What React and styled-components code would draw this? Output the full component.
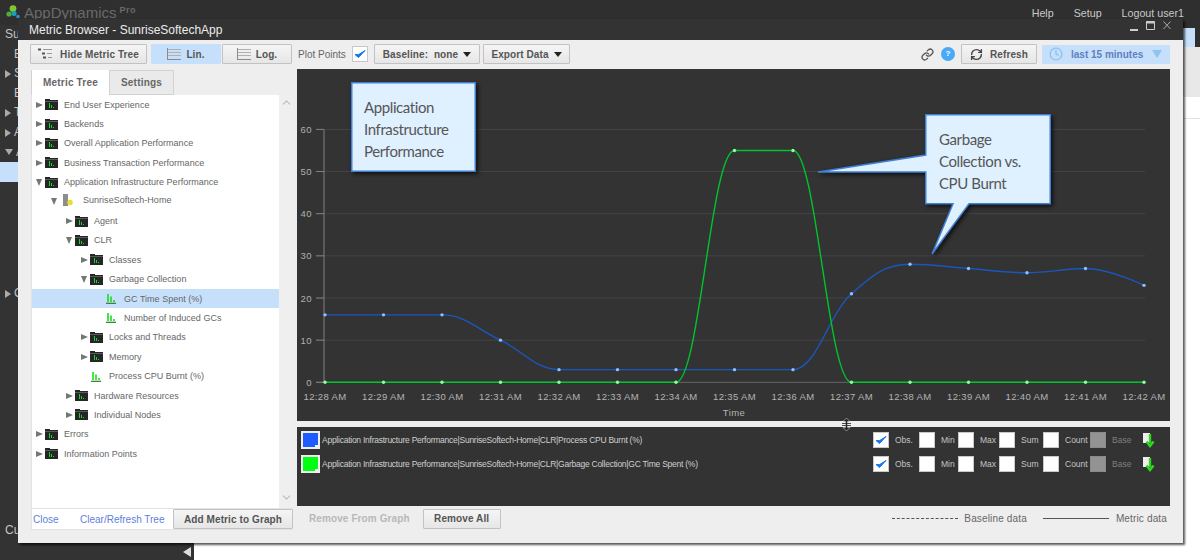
import React from 'react';
import styled, { createGlobalStyle } from 'styled-components';
import { ChevronUp, ChevronDown, Clock, Link as LinkIcon, RefreshCw } from 'lucide-react';

const GlobalStyle = createGlobalStyle`
  html, body {
    margin: 0;
    padding: 0;
    background: #fff;
    font-family: "Liberation Sans", Arial, sans-serif;
  }
`;

const Page = styled.div`
  position: relative;
  width: 1200px;
  height: 560px;
  overflow: hidden;
  display: flex;
  flex-direction: column;
`;

const TopBar = styled.header`
  height: 25px;
  background: #2f2f2f;
  display: flex;
  align-items: flex-start;
  padding: 5px 16px 0 6px;
  box-sizing: border-box;
`;

const BrandName = styled.span`
  margin-left: 4px;
  font-size: 15px;
  line-height: 16px;
  color: #6a6a6a;
`;

const BrandTag = styled.span`
  margin: 1px 0 0 3px;
  font-size: 9px;
  line-height: 9px;
  font-weight: bold;
  letter-spacing: 0.5px;
  color: #6a6a6a;
`;

const TopNav = styled.nav`
  margin-left: auto;
  display: flex;
  gap: 20px;
  font-size: 10.7px;
  line-height: 16px;
  color: #c8c8c8;
`;

const Shell = styled.div`
  flex: 1;
  display: flex;
`;

const Sidebar = styled.aside`
  width: 194px;
  background: #333;
  display: flex;
  flex-direction: column;
  color: #c4c4c4;
  font-size: 12px;
`;

const SideItem = styled.div`
  height: 19.6px;
  line-height: 19.6px;
  display: flex;
  align-items: center;
  gap: 3px;
  padding-left: ${(p) => p.$indent || 5}px;
  margin-top: ${(p) => p.$gap || 0}px;
  background: ${(p) => (p.$active ? '#c6e0fb' : 'transparent')};
`;

const SideCollapse = styled.div`
  margin: auto 3px 3px auto;
  width: 0;
  height: 0;
  border-top: 5px solid transparent;
  border-bottom: 5px solid transparent;
  border-right: 8px solid #ddd;
`;

const Content = styled.main`
  flex: 1;
  display: flex;
  flex-direction: column;
`;

const SubBar = styled.div`
  height: 22px;
  background: #2f2f2f;
  display: flex;
  justify-content: flex-end;
  padding-right: 5px;
`;

const SubBarButton = styled.div`
  width: 60px;
  height: 19px;
  margin-top: 3px;
  background: #c6e0fb;
`;

const GreyBand = styled.div`
  height: 50px;
  background: #e8e8e8;
`;

const WhiteArea = styled.div`
  flex: 1;
  background: #fff;
`;

const WhiteRule = styled.div`
  margin-top: 21px;
  border-top: 1px solid #e2e2e2;
`;

const Modal = styled.section`
  position: absolute;
  left: 18px;
  top: 19px;
  width: 1165px;
  height: 524px;
  display: flex;
  flex-direction: column;
  box-shadow: 2px 2px 2px rgba(0, 0, 0, 0.65);
`;

const TitleBar = styled.div`
  height: 21px;
  background: #333;
  display: flex;
  align-items: center;
  padding: 0 12px 0 11px;
  color: #ededed;
  font-size: 12px;
`;

const WindowControls = styled.div`
  margin-left: auto;
  display: flex;
  align-items: flex-start;
  gap: 8px;
  margin-top: -7px;
`;

const ModalBody = styled.div`
  flex: 1;
  background: #eee;
  padding: 4px 13px 0 12px;
  display: flex;
  flex-direction: column;
  gap: 5px;
`;

const Toolbar = styled.div`
  height: 20px;
  display: flex;
  align-items: center;
`;

const Button = styled.button`
  height: 20px;
  width: ${(p) => p.$w}px;
  flex: none;
  margin-left: ${(p) => p.$ml || 0}px;
  box-sizing: border-box;
  padding: 0;
  display: flex;
  align-items: center;
  justify-content: center;
  gap: ${(p) => p.$iconGap || 5}px;
  background: ${(p) => (p.$active ? '#c6e0fb' : 'linear-gradient(#f5f5f5, #e6e6e6)')};
  border: 1px solid ${(p) => (p.$active ? '#c6e0fb' : '#c2c2c2')};
  border-radius: 1px;
  font-family: inherit;
  font-size: 10px;
  font-weight: bold;
  letter-spacing: 0.1px;
  white-space: nowrap;
  color: #555;
`;

const ToolLabel = styled.span`
  margin-left: 6px;
  width: 46px;
  font-size: 10px;
  white-space: nowrap;
  color: #666;
`;

const Check = styled.span`
  width: 16px;
  height: 16px;
  margin-left: ${(p) => p.$ml || 0}px;
  box-sizing: border-box;
  flex: none;
  display: inline-flex;
  align-items: center;
  justify-content: center;
  background: ${(p) => (p.$disabled ? '#939393' : '#fff')};
  border: 1px solid ${(p) => (p.$disabled ? '#8a8a8a' : '#c8c8c8')};
`;

const Caret = styled.i`
  width: 0;
  height: 0;
  border-left: 4px solid transparent;
  border-right: 4px solid transparent;
  border-top: 5px solid #222;
`;

const ToolRight = styled.div`
  margin-left: auto;
  display: flex;
  align-items: center;
`;

const Help = styled.span`
  width: 14px;
  height: 14px;
  margin: 0 6px 0 7px;
  border-radius: 50%;
  background: #4aa9f6;
  color: #fff;
  font-size: 8px;
  font-weight: bold;
  line-height: 14px;
  text-align: center;
`;

const TimeRange = styled.div`
  width: 128px;
  height: 19px;
  margin-left: 5px;
  padding: 0 8px 0 7px;
  box-sizing: border-box;
  display: flex;
  align-items: center;
  background: #c6e0fb;
  font-size: 10px;
  font-weight: bold;
  white-space: nowrap;
  color: #5f80bd;
`;

const TimeText = styled.span`
  margin-left: 8px;
`;

const TimeCaret = styled.i`
  margin-left: auto;
  width: 0;
  height: 0;
  border-left: 5px solid transparent;
  border-right: 5px solid transparent;
  border-top: 8px solid #8fc3ef;
`;

const MainGrid = styled.div`
  display: grid;
  grid-template-columns: 262px 873px;
  gap: 4px;
  margin-left: 1px;
`;

const LeftColumn = styled.div`
  padding-top: 1px;
  display: flex;
  flex-direction: column;
`;

const Tabs = styled.div`
  height: 25px;
  display: flex;
`;

const Tab = styled.div`
  width: ${(p) => p.$w}px;
  box-sizing: border-box;
  display: flex;
  align-items: center;
  justify-content: center;
  background: ${(p) => (p.$active ? '#fff' : '#eaeaea')};
  border: 1px solid #d2d2d2;
  border-bottom: ${(p) => (p.$active ? 'none' : '1px solid #d2d2d2')};
  border-left-width: ${(p) => (p.$active ? 1 : 0)}px;
  border-top-width: ${(p) => (p.$active ? 0 : 1)}px;
  font-size: 10px;
  font-weight: bold;
  letter-spacing: 0.2px;
  color: #666;
`;

const TreeBox = styled.div`
  height: 413px;
  display: flex;
`;

const TreeList = styled.div`
  flex: 1;
  background: #fff;
  border-left: 1px solid #e3e3e3;
`;

const ScrollRail = styled.div`
  width: 14px;
  display: flex;
  flex-direction: column;
  justify-content: space-between;
  align-items: center;
  padding: 1px 0 4px;
  color: #bbb;
  background: #efefef;
`;

const TreeRow = styled.div`
  height: 19.4px;
  display: flex;
  align-items: center;
  padding-left: ${(p) => 4 + p.$level * 15}px;
  background: ${(p) => (p.$selected ? '#c6e0fb' : 'transparent')};
  font-size: 9px;
  letter-spacing: 0.02px;
  color: #666;
`;

const Twisty = styled.span`
  width: 9px;
  flex: none;
  display: inline-flex;
`;

const TwistyShape = styled.i`
  width: 0;
  height: 0;
  ${(p) => (p.$open
    ? `border-left: 3.5px solid transparent;
       border-right: 3.5px solid transparent;
       border-top: 7px solid #6f7a70;`
    : `border-top: 3.5px solid transparent;
       border-bottom: 3.5px solid transparent;
       border-left: 7px solid #6f7a70;`)}
`;

const FolderSvg = styled.svg`
  flex: none;
  margin-right: 6px;
`;

const MetricSvg = styled.svg`
  flex: none;
  margin: 0 8px 0 1px;
`;

const ServerSvg = styled.svg`
  flex: none;
  margin: -3px 10px 0 3px;
`;

const NodeLabel = styled.span`
  position: relative;
  top: ${(p) => (p.$raised ? -2 : 0)}px;
`;

const TreeFooter = styled.div`
  height: 22px;
  display: flex;
  align-items: center;
  background: #fff;
  border: 1px solid #e3e3e3;
  border-right: none;
  box-sizing: border-box;
  padding-left: 1px;
  font-size: 10px;
  color: #5f80dc;
`;

const FooterLink = styled.span`
  width: ${(p) => p.$w}px;
  flex: none;
  white-space: nowrap;
`;

const RightColumn = styled.div`
  display: flex;
  flex-direction: column;
`;

const ChartPanel = styled.div`
  position: relative;
  height: 352px;
  background: #333;
`;

const ChartSvg = styled.svg`
  display: block;
  font-family: "Liberation Sans", Arial, sans-serif;
`;

const ResizeCursor = styled.svg`
  position: absolute;
  left: 545px;
  bottom: -10px;
`;

const Balloon = styled.div`
  position: absolute;
  left: ${(p) => p.$left}px;
  top: ${(p) => p.$top}px;
`;

const BalloonShape = styled.svg`
  display: block;
  overflow: visible;
  filter: drop-shadow(2px 2px 2px rgba(0, 0, 0, 0.7));
`;

const BalloonText = styled.div`
  position: absolute;
  left: ${(p) => p.$x}px;
  top: 14px;
  font-family: Lato, "Open Sans", sans-serif;
  font-size: 15px;
  line-height: 22px;
  letter-spacing: -0.4px;
  color: #565656;
  white-space: nowrap;
`;

const LegendPanel = styled.div`
  height: 79px;
  margin-top: 6px;
  box-sizing: border-box;
  padding: 1px 15px 0 4px;
  background: #333;
`;

const LegendRow = styled.div`
  height: 24px;
  display: flex;
  align-items: center;
`;

const Swatch = styled.span`
  position: relative;
  width: 19px;
  height: 18px;
  box-sizing: border-box;
  flex: none;
  border: 2px solid #eee;
  background: ${(p) => p.$color};
  &::after {
    content: '';
    position: absolute;
    right: -1px;
    bottom: -1px;
    width: 4px;
    height: 3px;
    background: #eee;
  }
`;

const LegendName = styled.span`
  margin-left: 2px;
  font-size: 8.5px;
  letter-spacing: -0.25px;
  color: #cfcfcf;
  white-space: nowrap;
`;

const LegendControls = styled.div`
  margin-left: auto;
  display: flex;
  align-items: center;
`;

const StatLabel = styled.span`
  width: ${(p) => p.$w}px;
  margin-left: 6px;
  font-size: 8.5px;
  color: ${(p) => (p.$muted ? '#7e7e7e' : '#c4c4c4')};
`;

const BottomBar = styled.div`
  height: 25px;
  display: flex;
  align-items: center;
  font-size: 10px;
  color: #666;
`;

const DisabledAction = styled.span`
  margin-left: 12px;
  font-weight: bold;
  letter-spacing: 0.1px;
  white-space: nowrap;
  color: #b8b8b8;
`;

const KeyArea = styled.div`
  margin-left: auto;
  display: flex;
  align-items: center;
  padding-right: 3px;
  letter-spacing: 0.15px;
  white-space: nowrap;
`;

const KeyLine = styled.i`
  width: 66px;
  margin: ${(p) => (p.$dashed ? '0 6px 0 0' : '0 7px 0 16px')};
  border-top: 1px ${(p) => (p.$dashed ? 'dashed' : 'solid')} #555;
`;

const SideCaret = styled.i`
  width: 0;
  height: 0;
  ${(p) => (p.$open
    ? `border-left: 4px solid transparent;
       border-right: 4px solid transparent;
       border-top: 6px solid #aaa;`
    : `border-top: 4px solid transparent;
       border-bottom: 4px solid transparent;
       border-left: 6px solid #aaa;`)}
`;

// nodes of the metric tree, level is the indent
const treeNodes = [
  { label: 'End User Experience', level: 0, kind: 'folder' },
  { label: 'Backends', level: 0, kind: 'folder' },
  { label: 'Overall Application Performance', level: 0, kind: 'folder' },
  { label: 'Business Transaction Performance', level: 0, kind: 'folder' },
  { label: 'Application Infrastructure Performance', level: 0, kind: 'folder', open: true },
  { label: 'SunriseSoftech-Home', level: 1, kind: 'server', open: true },
  { label: 'Agent', level: 2, kind: 'folder' },
  { label: 'CLR', level: 2, kind: 'folder', open: true },
  { label: 'Classes', level: 3, kind: 'folder' },
  { label: 'Garbage Collection', level: 3, kind: 'folder', open: true },
  { label: 'GC Time Spent (%)', level: 4, kind: 'metric', selected: true },
  { label: 'Number of Induced GCs', level: 4, kind: 'metric' },
  { label: 'Locks and Threads', level: 3, kind: 'folder' },
  { label: 'Memory', level: 3, kind: 'folder' },
  { label: 'Process CPU Burnt (%)', level: 3, kind: 'metric' },
  { label: 'Hardware Resources', level: 2, kind: 'folder' },
  { label: 'Individual Nodes', level: 2, kind: 'folder' },
  { label: 'Errors', level: 0, kind: 'folder' },
  { label: 'Information Points', level: 0, kind: 'folder' },
];

const times = ['12:28 AM', '12:29 AM', '12:30 AM', '12:31 AM', '12:32 AM', '12:33 AM', '12:34 AM', '12:35 AM',
  '12:36 AM', '12:37 AM', '12:38 AM', '12:39 AM', '12:40 AM', '12:41 AM', '12:42 AM'];
const cpuValues = [16, 16, 16, 10, 3, 3, 3, 3, 3, 21, 28, 27, 26, 27, 23];
const gcValues = [0, 0, 0, 0, 0, 0, 0, 55, 55, 0, 0, 0, 0, 0, 0];

const legendRows = [
  { color: '#1f5cff', name: 'Application Infrastructure Performance|SunriseSoftech-Home|CLR|Process CPU Burnt (%)' },
  { color: '#00ff12', name: 'Application Infrastructure Performance|SunriseSoftech-Home|CLR|Garbage Collection|GC Time Spent (%)' },
];

const stats = [
  { label: 'Obs.', w: 24, checked: true },
  { label: 'Min', w: 17 },
  { label: 'Max', w: 19 },
  { label: 'Sum', w: 22 },
  { label: 'Count', w: 25 },
];

const xAt = (i) => 28 + i * 58.5;
const yAt = (v) => 313.3 - v * 4.215;

// same smoothing as the chart library's spline series
const splinePath = (values) => {
  const pts = values.map((v, i) => [xAt(i), yAt(v)]);
  const s = 1.5;
  const conts = pts.map(([x, y], i) => {
    if (i === 0 || i === pts.length - 1) return { left: [x, y], right: [x, y] };
    const [px, py] = pts[i - 1];
    const [nx, ny] = pts[i + 1];
    const lx = (s * x + px) / (s + 1);
    let ly = (s * y + py) / (s + 1);
    const rx = (s * x + nx) / (s + 1);
    let ry = (s * y + ny) / (s + 1);
    const c = ((ry - ly) * (rx - x)) / (rx - lx) + y - ry;
    ly += c;
    ry += c;
    if (ly > py && ly > y) {
      ly = Math.max(py, y);
      ry = 2 * y - ly;
    } else if (ly < py && ly < y) {
      ly = Math.min(py, y);
      ry = 2 * y - ly;
    }
    if (ry > ny && ry > y) {
      ry = Math.max(ny, y);
      ly = 2 * y - ry;
    } else if (ry < ny && ry < y) {
      ry = Math.min(ny, y);
      ly = 2 * y - ry;
    }
    return { left: [lx, ly], right: [rx, ry] };
  });
  let d = `M${pts[0][0]} ${pts[0][1]}`;
  for (let i = 1; i < pts.length; i += 1) {
    d += ` C${conts[i - 1].right.join(' ')} ${conts[i].left.join(' ')} ${pts[i].join(' ')}`;
  }
  return d;
};

const CheckMark = () => (
  <svg width="12" height="10" viewBox="0 0 12 10">
    <path d="M1 5.5 L4.5 8.5 L11 1.5 L4.6 5.6 Z" fill="#1277ee" stroke="#1277ee" strokeWidth="1" strokeLinejoin="round" />
  </svg>
);

const Logo = () => (
  <svg width="14" height="14" viewBox="0 0 14 14">
    <circle cx="7" cy="3.6" r="3.4" fill="#7ec832" />
    <circle cx="3" cy="9" r="2.6" fill="#49b03c" />
    <circle cx="8" cy="8.6" r="2.5" fill="#16a0c8" />
    <circle cx="12" cy="11.5" r="1.8" fill="#2c8fd8" />
  </svg>
);

const FolderIcon = () => (
  <FolderSvg width="13" height="11" viewBox="0 0 13 11" shapeRendering="crispEdges">
    <path d="M0 0 H5 V1 H13 V11 H0 Z" fill="#262626" />
    <path d="M0 2.5 H13" stroke="#5a5a5a" strokeWidth="1" />
    <path d="M4.5 4 V9 M6.5 6 V9 M8.5 8 V9" stroke="#18d32a" strokeWidth="1" />
  </FolderSvg>
);

const MetricIcon = () => (
  <MetricSvg width="10" height="11" viewBox="0 0 10 11">
    <path d="M2 1 V9 M5 3.5 V9 M8 7 V9" stroke="#1bdc1b" strokeWidth="1.6" />
    <path d="M0 10.3 H10" stroke="#2a7a2a" strokeWidth="1.2" />
  </MetricSvg>
);

const ServerIcon = () => (
  <ServerSvg width="10" height="12" viewBox="0 0 10 12">
    <rect x="0" y="0" width="5" height="12" fill="#8c8c8c" />
    <circle cx="7" cy="8.5" r="2.8" fill="#e6e02a" />
  </ServerSvg>
);

const nodeIcons = { folder: FolderIcon, metric: MetricIcon, server: ServerIcon };

const TreeNode = ({ node }) => {
  const Icon = nodeIcons[node.kind];
  return (
    <TreeRow $level={node.level} $selected={node.selected}>
      <Twisty>{node.kind !== 'metric' && <TwistyShape $open={node.open} />}</Twisty>
      <Icon />
      <NodeLabel $raised={node.kind === 'server'}>{node.label}</NodeLabel>
    </TreeRow>
  );
};

const HideTreeIcon = () => (
  <svg width="15" height="12" viewBox="0 0 15 12">
    <path d="M0 1.5 H3 M4 5.5 H7 M5 9.5 H8" stroke="#555" strokeWidth="2" />
    <path d="M5 1.5 H14 M9 5.5 H14 M10 9.5 H14" stroke="#999" strokeWidth="1" />
  </svg>
);

const ScaleIcon = () => (
  <svg width="14" height="12" viewBox="0 0 14 12">
    <path d="M0.5 0 V12 M0 11.5 H14" stroke="#8a8a8a" strokeWidth="1" />
    <path d="M1 1.5 H14 M1 4.5 H14 M1 7.5 H14" stroke="#b0b0b0" strokeWidth="1" />
  </svg>
);

const Chart = () => (
  <ChartSvg width="873" height="352" viewBox="0 0 873 352">
    {[0, 10, 20, 30, 40, 50, 60].map((v) => (
      <g key={v}>
        <line x1="19" x2="848" y1={yAt(v)} y2={yAt(v)} stroke={v === 0 ? '#666' : '#454545'} />
        <line x1="19" x2="27" y1={yAt(v)} y2={yAt(v)} stroke="#808080" />
        <text x="15" y={yAt(v) + 3.5} textAnchor="end" fontSize="9.5" letterSpacing="0.5" fill="#b0b0b0">{v}</text>
      </g>
    ))}
    <line x1="27" x2="27" y1={yAt(60)} y2={yAt(0)} stroke="#808080" />
    {times.map((t, i) => (
      <text key={t} x={xAt(i)} y="330.5" textAnchor="middle" fontSize="9.5" letterSpacing="0.35" fill="#b4b4b4">{t}</text>
    ))}
    <text x="437" y="347" textAnchor="middle" fontSize="9.5" letterSpacing="0.4" fill="#b4b4b4">Time</text>
    <path d={splinePath(cpuValues)} fill="none" stroke="#1a57bd" strokeWidth="1.4" />
    {cpuValues.map((v, i) => (
      <circle key={i} cx={xAt(i)} cy={yAt(v)} r="1.7" fill="#8fc0ff" />
    ))}
    <path d={splinePath(gcValues)} fill="none" stroke="#00c42b" strokeWidth="1.4" />
    {gcValues.map((v, i) => (
      <circle key={i} cx={xAt(i)} cy={yAt(v)} r="1.7" fill="#8dffa0" />
    ))}
  </ChartSvg>
);

export default function App() {
  return (
    <Page>
      <GlobalStyle />
      <TopBar>
        <Logo />
        <BrandName>AppDynamics</BrandName>
        <BrandTag>Pro</BrandTag>
        <TopNav>
          <span>Help</span>
          <span>Setup</span>
          <span>Logout user1</span>
        </TopNav>
      </TopBar>
      <Shell>
        <Sidebar>
          <SideItem>Su</SideItem>
          <SideItem $indent={14}>E</SideItem>
          <SideItem><SideCaret />S</SideItem>
          <SideItem $indent={14}>E</SideItem>
          <SideItem><SideCaret />T</SideItem>
          <SideItem><SideCaret />A</SideItem>
          <SideItem><SideCaret $open />A</SideItem>
          <SideItem $active />
          <SideItem $gap={102}><SideCaret />C</SideItem>
          <SideItem $gap={218}>Cu</SideItem>
          <SideCollapse />
        </Sidebar>
        <Content>
          <SubBar><SubBarButton /></SubBar>
          <GreyBand />
          <WhiteArea><WhiteRule /></WhiteArea>
        </Content>
      </Shell>

      <Modal>
        <TitleBar>
          Metric Browser - SunriseSoftechApp
          <WindowControls>
            <svg width="8" height="10" viewBox="0 0 8 10"><path d="M0 9 H8" stroke="#ccc" strokeWidth="2" /></svg>
            <svg width="9" height="9" viewBox="0 0 9 9"><path d="M0.5 0.5 H8.5 V8.5 H0.5 Z" fill="none" stroke="#ccc" /><path d="M0 1.5 H9" stroke="#ccc" strokeWidth="2" /></svg>
            <svg width="8" height="9" viewBox="0 0 8 9"><path d="M0.5 0.5 L7.5 8 M7.5 0.5 L0.5 8" stroke="#aaa" /></svg>
          </WindowControls>
        </TitleBar>
        <ModalBody>
          <Toolbar>
            <Button $w={117} $iconGap={7}><HideTreeIcon />Hide Metric Tree</Button>
            <Button $w={70} $ml={4} $active><ScaleIcon />Lin.</Button>
            <Button $w={70} $ml={1}><ScaleIcon />Log.</Button>
            <ToolLabel>Plot Points</ToolLabel>
            <Check $ml={8}><CheckMark /></Check>
            <Button $w={106} $ml={6}>Baseline:&nbsp; none <Caret /></Button>
            <Button $w={87} $ml={3}>Export Data <Caret /></Button>
            <ToolRight>
              <LinkIcon size={13} color="#555" strokeWidth={2.4} />
              <Help>?</Help>
              <Button $w={76} $iconGap={7}><RefreshCw size={13} color="#444" strokeWidth={2.6} />Refresh</Button>
              <TimeRange>
                <Clock size={14} color="#8fc3ef" strokeWidth={2.4} />
                <TimeText>last 15 minutes</TimeText>
                <TimeCaret />
              </TimeRange>
            </ToolRight>
          </Toolbar>

          <MainGrid>
            <LeftColumn>
              <Tabs>
                <Tab $w={79} $active>Metric Tree</Tab>
                <Tab $w={64}>Settings</Tab>
              </Tabs>
              <TreeBox>
                <TreeList>
                  {treeNodes.map((node) => <TreeNode key={node.label} node={node} />)}
                </TreeList>
                <ScrollRail>
                  <ChevronUp size={13} />
                  <ChevronDown size={13} />
                </ScrollRail>
              </TreeBox>
              <TreeFooter>
                <FooterLink $w={47}>Close</FooterLink>
                <FooterLink $w={93}>Clear/Refresh Tree</FooterLink>
                <Button $w={120}>Add Metric to Graph</Button>
              </TreeFooter>
            </LeftColumn>

            <RightColumn>
              <ChartPanel>
                <Chart />
                <Balloon $left={54} $top={13}>
                  <BalloonShape width="125" height="90" viewBox="0 0 125 90">
                    <path d="M0.75 0.75 H124.25 V89.25 H0.75 Z" fill="#dff0ff" stroke="#3f80d4" strokeWidth="1.5" />
                  </BalloonShape>
                  <BalloonText $x={13}>Application<br />Infrastructure<br />Performance</BalloonText>
                </Balloon>
                <Balloon $left={521} $top={45}>
                  <BalloonShape width="233" height="141" viewBox="0 0 233 141">
                    <path
                      d="M107.75 0.75 H232.25 V89.75 H151 L114 140 L135 89.75 H107.75 V58 L0 58 L107.75 41 Z"
                      fill="#dff0ff"
                      stroke="#3f80d4"
                      strokeWidth="1.5"
                    />
                  </BalloonShape>
                  <BalloonText $x={121}>Garbage<br />Collection vs.<br />CPU Burnt</BalloonText>
                </Balloon>
                <ResizeCursor width="9" height="13" viewBox="0 0 9 13">
                  <path d="M4.5 0 L8 3.5 H5.5 V9.5 H8 L4.5 13 L1 9.5 H3.5 V3.5 H1 Z" fill="#222" stroke="#eee" strokeWidth="0.5" />
                  <path d="M0 5.5 H9 M0 7.5 H9" stroke="#222" strokeWidth="0.8" />
                </ResizeCursor>
              </ChartPanel>

              <LegendPanel>
                {legendRows.map((row) => (
                  <LegendRow key={row.name}>
                    <Swatch $color={row.color} />
                    <LegendName>{row.name}</LegendName>
                    <LegendControls>
                      {stats.map((s) => (
                        <React.Fragment key={s.label}>
                          <Check>{s.checked && <CheckMark />}</Check>
                          <StatLabel $w={s.w}>{s.label}</StatLabel>
                        </React.Fragment>
                      ))}
                      <Check $disabled />
                      <StatLabel $w={31} $muted>Base</StatLabel>
                      <svg width="12" height="15" viewBox="0 0 12 15">
                        <rect x="0" y="0" width="7" height="10" fill="#eee" />
                        <path d="M7 1 V10 M3.5 8.5 L7 13 L10.5 8.5" fill="none" stroke="#2fd81e" strokeWidth="2.4" />
                      </svg>
                    </LegendControls>
                  </LegendRow>
                ))}
              </LegendPanel>

              <BottomBar>
                <DisabledAction>Remove From Graph</DisabledAction>
                <Button $w={78} $ml={13}>Remove All</Button>
                <KeyArea>
                  <KeyLine $dashed />
                  Baseline data
                  <KeyLine />
                  Metric data
                </KeyArea>
              </BottomBar>
            </RightColumn>
          </MainGrid>
        </ModalBody>
      </Modal>
    </Page>
  );
}
